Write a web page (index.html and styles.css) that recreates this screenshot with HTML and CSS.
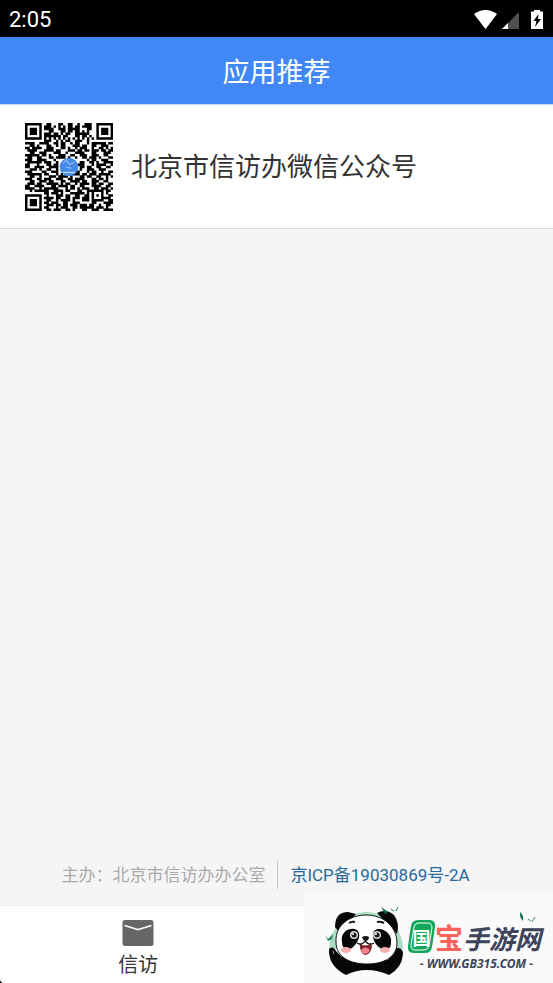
FILE: index.html
```html
<!DOCTYPE html>
<html lang="zh-CN">
<head>
<meta charset="utf-8">
<meta name="viewport" content="width=device-width, initial-scale=1">
<title>应用推荐</title>
<link rel="stylesheet" href="styles.css">
</head>
<body>
<div class="status">
  <span>2:05</span>
  <svg class="status-icons" width="72" height="22" viewBox="0 0 72 22" aria-hidden="true">
    <path d="M1 5Q12.500-3 24 5L13 19.500Q12.500 20 12 19.500Z" fill="#fff"/>
    <path d="M46 3V20H29Z" fill="#505050"/>
    <path d="M35 14V20H29Z" fill="#fff"/>
    <path d="M58 2.500H61V1H67V2.500H70V20H58Z" fill="#fff"/>
    <path d="M65.500 5L60.500 12H63.500L62 18L68 10H65Z" fill="#000"/>
  </svg>
</div>
<header class="header"><h1>应用推荐</h1></header>
<main class="content">
  <section class="app">
    <svg id="qr" class="qr" viewBox="0 0 37 37" role="img" aria-label="二维码">
      <path id="modules"/>
      <circle cx="18.500" cy="18.500" r="3.900" fill="#4589e7"/>
      <path d="M16 17L17.500 15.500L18.500 17.500L20.800 16.500M17 18.500L19.500 19" fill="none" stroke="#8dbaf3" stroke-width=".5"/>
      <path d="M16 20.800H21" stroke="#b9d5fa" stroke-width=".6"/>
    </svg>
    <h2>北京市信访办微信公众号</h2>
  </section>
</main>
<footer class="footer">
  <span class="host">主办：北京市信访办办公室</span>
  <a class="icp" href="#">京ICP备19030869号-2A</a>
</footer>
<nav class="tabs">
  <a class="tab" href="#">
    <svg width="32" height="26" viewBox="0 0 32 26" aria-hidden="true">
      <rect x=".5" width="31" height="26" rx="2.500" fill="#666"/>
      <path d="M2.500 5.500L14 9Q16 10 18 9L29.500 5.500" fill="none" stroke="#fff" stroke-width="1.500"/>
    </svg>
    <span>信访</span>
  </a>
</nav>
<svg class="corner" width="3" height="4" viewBox="0 0 3 4" aria-hidden="true"><path d="M0 0Q0 3 3 4H0Z"/></svg>
<aside class="brand">
  <svg class="panda" width="82" height="74" viewBox="0 0 82 74" aria-hidden="true">
    <path d="M5 44A37 37 0 1 1 79 44Z" fill="#a8dfc3"/>
    <path d="M5 44Q9 40 12 46L18 52H63L69 47C71 41 79 42 79 49Q78 63 65 70Q42 60 22 70Q4 61 5 44Z" fill="#070709"/>
    <path d="M11 22Q11 7 24 7L32 9L16 28ZM53 8Q62 3 70 10Q76 18 73 29Z" fill="#070709"/>
    <path d="M12 37C11 19 27 10 42 10C60 10 73 22 73 38C73 52 60 59 43 59C26 59 12 52 12 37Z" fill="#fff" stroke="#111" stroke-width="1"/>
    <path d="M18 37C16 27 26 21 33 25C38 29 34 38 28 43C22 46 18 43 18 37ZM50 26C57 20 69 29 67 38C67 44 62 47 56 43C50 39 47 30 50 26Z" fill="#070709"/>
    <circle cx="30" cy="30" r="4" fill="#ddd"/><circle cx="30" cy="30" r="2.500" fill="#161616"/><circle cx="29" cy="29" r="1" fill="#fff"/>
    <circle cx="53" cy="30" r="4" fill="#ddd"/><circle cx="53" cy="30" r="2.500" fill="#161616"/><circle cx="52" cy="29" r="1" fill="#fff"/>
    <path d="M25 18Q28 16 31 17M53 17Q56 16 60 18" fill="none" stroke="#161616" stroke-width="2"/>
    <path d="M35.500 38Q41 43 47 38L48 42Q46 50 41 50Q36 49 35.500 38Z" fill="#7d2630"/>
    <path d="M37 45Q41 40 46 45Q43 51 38 48Z" fill="#f4818a"/>
    <path d="M38 32Q42 30 45 32Q45 35 42 36Q39 36 38 32Z" fill="#161616"/>
    <path d="M33 38Q38 41 41 36Q45 41 50 38" fill="none" stroke="#161616" stroke-width="1.300"/>
    <ellipse cx="22" cy="45" rx="5" ry="3" fill="#f7aeb0"/><ellipse cx="61" cy="45" rx="5" ry="3" fill="#f7aeb0"/>
    <path d="M65 49Q62 51 64 55M9 46L10 49" fill="none" stroke="#ddd" stroke-width=".7"/>
    <path d="M1 30L4 34L9 29L8 34L4 36Z" fill="#27835f"/>
    <path d="M57 2L63 6L62 10Z" fill="#167047"/>
    <path d="M67 4L70 6M74 2L72 6" stroke="#27835f" stroke-width="1"/>
  </svg>
  <div class="brand-copy">
    <div class="brand-name">
      <span class="seal">
        <svg class="seal-shape" viewBox="0 0 27 34" aria-hidden="true">
          <path d="M10 0H21Q28 0 27 7L24 27Q23 33 17 33H6Q-1 33 0 26L3 6Q4 0 10 0Z" fill="#12a65b"/>
          <path d="M10 3H20Q24 3 24 8L21 26Q20 30 16 30H7Q3 30 3 25L6 7Q7 3 10 3Z" fill="none" stroke="#fff"/>
        </svg>
        <span class="seal-text">国</span>
      </span>
      <span class="treasure">宝</span><span class="site">手游网</span>
    </div>
    <div class="brand-url">- WWW.GB315.COM -</div>
  </div>
  <svg class="leaves" width="18" height="13" viewBox="0 0 18 13" aria-hidden="true">
    <path d="M1 1Q5 4 4 10Q0 6 1 1Z" fill="#187653"/><path d="M9 8L12 10M16 6L13 11" stroke="#6aa58c" stroke-width="1.300"/>
  </svg>
</aside>
<script src="qr.js"></script>
</body>
</html>
```
FILE: styles.css
```css
* { box-sizing: border-box; }
body {
  margin: 0;
  min-height: 100vh;
  display: flex;
  flex-direction: column;
  position: relative;
  overflow-x: hidden;
  background: #f5f5f5;
  color: #333;
  font-family: Roboto, "Noto Sans CJK SC", sans-serif;
}
h1, h2 { margin: 0; font-weight: 400; }
a { text-decoration: none; color: inherit; }
svg { display: block; flex: none; }
.status {
  height: 37px;
  padding: 2px 8px 0 9px;
  display: flex;
  align-items: center;
  justify-content: space-between;
  background: #000;
  color: #fff;
  font-size: 22px;
}
.header {
  height: 68px;
  padding-top: 4px;
  display: flex;
  align-items: center;
  justify-content: center;
  background: #4287f6;
  border-bottom: 1px solid #c5d5ee;
  color: #fff;
}
.header h1 { font-size: 27px; line-height: 40px; }
.content { flex: 1; }
.app {
  display: flex;
  align-items: center;
  gap: 18px;
  padding: 18px 25px 17px;
  background: #fff;
  border-bottom: 1px solid #d8d8d8;
}
.qr { width: 88px; height: 88px; }
.app h2 { font-size: 26px; line-height: 36px; }
.footer {
  display: flex;
  align-items: center;
  justify-content: center;
  padding: 0 22px 16px 0;
  font-size: 17px;
  line-height: 28px;
}
.host { padding-right: 12px; border-right: 1px solid #c4c4c4; color: #aaa; }
.icp { padding-left: 12px; color: #28699a; }
.tabs {
  display: grid;
  grid-template-columns: 1fr 1fr;
  background: #fff;
  border-top: 1px solid #eee;
}
.tab {
  height: 77px;
  display: flex;
  flex-direction: column;
  align-items: center;
  padding-top: 14px;
  gap: 5px;
  font-size: 20px;
  line-height: 28px;
}
.corner { position: absolute; left: 0; bottom: 0; }
.brand {
  position: absolute;
  right: 0;
  bottom: 0;
  width: 249px;
  height: 91px;
  padding: 13px 8px 4px 20px;
  display: flex;
  gap: 2px;
  background: #fafafa;
  font-family: "Noto Sans CJK SC", sans-serif;
}
.brand-copy { flex: 1; padding-top: 15px; }
.brand-name {
  display: flex;
  align-items: center;
  height: 34px;
  font-weight: 700;
  white-space: nowrap;
}
.seal {
  display: grid;
  place-items: center;
  color: #fff;
  font-size: 18px;
  line-height: 33px;
}
.seal-shape { grid-area: 1 / 1; width: 27px; height: 34px; }
.seal-text { grid-area: 1 / 1; z-index: 1; }
.treasure { color: #fb6259; font-size: 28px; }
.site { color: #3d4359; font-size: 26px; font-style: italic; }
.brand-url {
  color: #3d4359;
  font: italic 700 12px/20px "Noto Sans", sans-serif;
  text-align: center;
  white-space: nowrap;
}
.leaves { position: absolute; right: 16px; top: 19px; }
```
FILE: qr.js
```js
// Each row is one line of modules in the code.
const rows = [
  "#######..##...##..##..#..###..#######",
  "#.....#.###.#.#.#.##.##.####..#.....#",
  "#.###.#.####..###.#####...##..#.###.#",
  "#.###.#...##...##.##.##.#.#...#.###.#",
  "#.###.#.###.##.#.##..######...#.###.#",
  "#.....#.#######.##...##.##.#..#.....#",
  "#######.#.#.#.#.#.#.#.#.#.#.#.#######",
  "........###..#.#.##..###..#..........",
  "####..####..##.##..#.##...#.######.##",
  "..##.#...##..#.##...###.##..##..###..",
  "##.####..###...##.#..#.###..#..##.#.#",
  ".####...####.##...###.##.##.###.##.##",
  "..##..###...###..#...####...##...###.",
  "######.##.#...###..##..###..###..##..",
  ".##..##...##.####.#..#..##.###.#...##",
  "###..####...#.............#.##..###..",
  ".######.###..#.........##..##.#..####",
  "##...#...##.##........###...#.####..#",
  "##..####..####.........##.##..##..##.",
  "..###.#..##..#.........#..###..###...",
  "###....##..###.......##...#.##..#..##",
  ".######.##...#.#....###.##.###.#####.",
  "..##..#...###.####.#...##.##..##..#.#",
  "###..##.###..###..##.####...##.##.#..",
  "..##..###.##...##..####.##..###..##..",
  ".###.##..#####.#.##..#.####.##.##..##",
  "##..####...##.####.##..##...####..##.",
  "####..#.######...#.##.#.###..##.###.#",
  "..#.######..####.##...##..#######.##.",
  "........##.###.#...######.#.#...#.#..",
  "#######..#...###.##..##..##.#.#.#..##",
  "#.....#.####.##..##.###.###.#...####.",
  "#.###.#..##..#.####.#...###.#####..##",
  "#.###.#.##.###..##..###.....##...####",
  "#.###.#..###.##.##.###.###.##..#..##.",
  "#.....#.##...#.###..##.######.###.#..",
  "#######..##.###..##.#...##..###..####"
];
document.getElementById("modules").setAttribute("d", rows.map((row, y) =>
  [...row].map((cell, x) => cell === "#" ? `M${x} ${y}h1.04v1.04h-1.04z` : "").join("")
).join(""));
```
